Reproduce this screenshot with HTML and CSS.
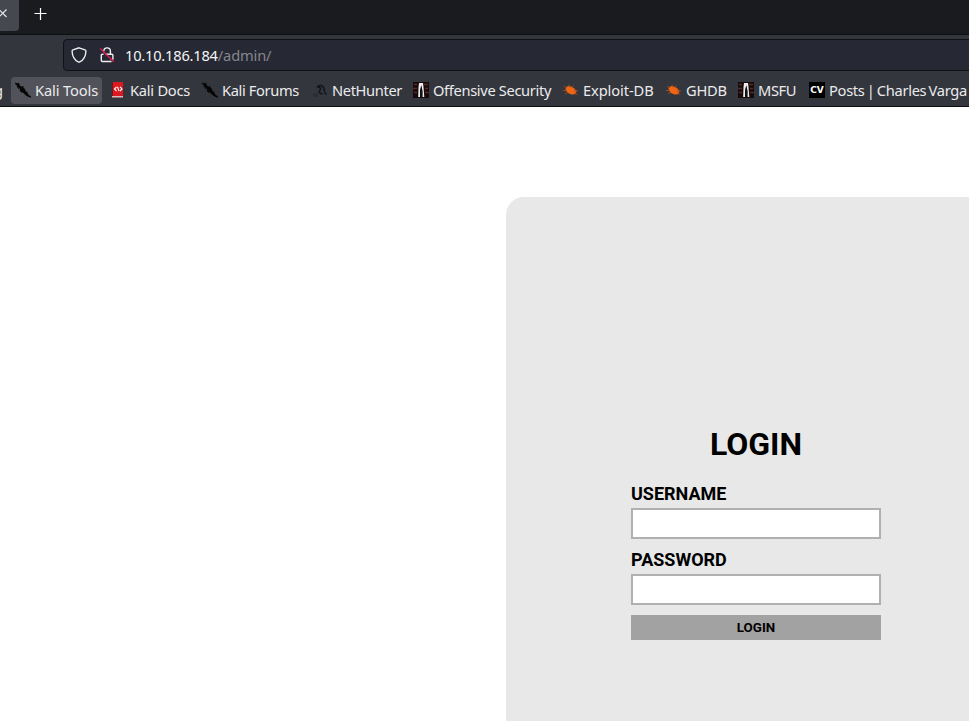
FILE: index.html
```html
<!DOCTYPE html>
<html lang="en">
<head>
<meta charset="utf-8">
<title>Login</title>
<link rel="stylesheet" href="styles.css">
</head>
<body>
<svg class="defs" width="0" height="0" aria-hidden="true">
  <symbol id="kali" viewBox="0 0 16 16"><path d="M0 .5l2 .8L4.500 1l-.3 1.500L6 4.500l3-.3-.8 1.200L10 7l.5 2 2 1.200.5 2 3 2.300v1.300l-3-1-2.500-1.500-1.700-2L6.500 10 5 8l-.5-2L2.500 5 2 3.500.5 2.500z"/><path d="M2 4l2 3M5 8l1.500 2.500" stroke="#050505"/></symbol>
  <symbol id="docs" viewBox="0 0 16 16"><path fill="#7d1118" d="M2 1h11v15H2z"/><path fill="#dc1820" d="M3 0h10v14H3z"/><path fill="#c9c2bd" d="M2 14h11v1.500H2z"/><path d="M6.500 5L4.500 7l2 2M10 4.800L12 7l-2 2M7.500 4.800L9 9" fill="none" stroke="#fff" stroke-width="1.100"/></symbol>
  <symbol id="hunter" viewBox="0 0 16 16"><path d="M5 5.500C7 2.500 11 3 12 6.500c.8 3-.2 5 2.500 6M6 5c3-.5 3 2 1.500 4-.8 1.500.5 2.500 3 3" fill="none" stroke="#121417" stroke-width="1.500"/><path d="M1 12.800l5-1M2 14h4" stroke="#24272b"/></symbol>
  <symbol id="offsec" viewBox="0 0 16 16"><path fill="#180a0a" d="M0 0h16v16H0z"/><path d="M1 2.500h3M11 2.500h4M0 6.500h4M12 6.500h3M1 10.500h3M12 10.500h4" stroke="#542b2b" stroke-width="1.500"/><path fill="#eee" d="M6 1h4l.5 4 .8 10H9.500V9L8.500 4 7 9v6H5.200l.3-10z"/><path fill="#111" d="M8.200 3l1 6v6H7V9z"/></symbol>
  <symbol id="bug" viewBox="0 0 16 16"><path fill="#ef6513" d="M2.500 6L5 4l3.500.8 3.200 2 1.800 3-1.500 2.500-3.500.2-3.500-1.500L3 8.500z"/><path d="M1 4.500l3 1M6 2.500l1 3M10 3.500l-.5 2.500M0 8.500h4M2 12l3-2M11 9l3 4M11 8l4 1" stroke="#ad5220" stroke-width=".8"/></symbol>
</svg>
<div class="window">
  <div class="tabs">
    <div class="tab"><svg width="19" height="31" viewBox="0 0 19 31"><path d="M-1 9.500l7.500 7.500M6.500 9.500L-1 17"/></svg></div>
    <svg class="plus" width="14" height="14" viewBox="0 0 14 14"><path d="M7.500 1v12M1.500 6.500h12"/></svg>
  </div>
  <div class="nav">
    <div class="url">
      <svg class="shield" width="16" height="16" viewBox="0 0 16 16"><path d="M8 .8l6 2.100c.7.300.9.700.9 1.300-.2 5-2.400 8.800-6.100 10.700-.5.300-1.100.300-1.600 0C3.500 13 1.300 9.200 1.100 4.200c0-.6.200-1 .9-1.300z"/></svg>
      <svg class="lock" width="16" height="16" viewBox="0 0 16 16"><path d="M4.800 4.200a3.300 3.300 0 0 1 6.600 0V7M6.500 7.200h6.200c.8 0 1.200.4 1.200 1.100v4.500M12.500 14.500h-9c-.8 0-1.200-.4-1.200-1.100V8.300c0-.7.400-1.100 1.200-1.100h1"/><path class="slash" d="M1.200 1.500l13.500 13.300"/></svg>
      <span class="address">10.10.186.184<i>/admin/</i></span>
    </div>
  </div>
  <div class="bookmarks">
    <span class="cut">g</span>
    <div class="bm active tools"><svg><use href="#kali"/></svg><span>Kali Tools</span></div>
    <div class="bm docs"><svg><use href="#docs"/></svg><span>Kali Docs</span></div>
    <div class="bm forums"><svg><use href="#kali"/></svg><span>Kali Forums</span></div>
    <div class="bm nethunter"><svg><use href="#hunter"/></svg><span>NetHunter</span></div>
    <div class="bm offensive"><svg><use href="#offsec"/></svg><span>Offensive Security</span></div>
    <div class="bm exploit"><svg><use href="#bug"/></svg><span>Exploit-DB</span></div>
    <div class="bm ghdb"><svg><use href="#bug"/></svg><span>GHDB</span></div>
    <div class="bm msfu"><svg><use href="#offsec"/></svg><span>MSFU</span></div>
    <div class="bm posts"><b class="cv">CV</b><span>Posts | Charles Varga</span></div>
  </div>
  <main class="page">
    <form class="card">
      <h1>LOGIN</h1>
      <label for="user">USERNAME</label>
      <input id="user" type="text">
      <label for="pass">PASSWORD</label>
      <input id="pass" type="password">
      <button type="button">LOGIN</button>
    </form>
  </main>
</div>
</body>
</html>
```
FILE: styles.css
```css
* { box-sizing: border-box; }
body { margin: 0; overflow: hidden; background: #fff; }
.defs { display: block; }
.window { width: 969px; height: 721px; overflow: hidden; font-family: "Noto Sans", sans-serif; display: flex; flex-direction: column; }
.tabs { height: 35px; flex: none; background: #1a1b1f; border-bottom: 1px solid #0e0f12; display: flex; align-items: flex-start; }
.tab { width: 19px; height: 31px; background: #46484f; border-radius: 0 0 4px 0; }
.tabs svg { display: block; fill: none; stroke: #e8e8ea; stroke-width: 1.2; }
.tabs .plus { margin: 7px 0 0 14px; stroke: #fff; stroke-width: 1.2; }
.nav { height: 40px; flex: none; background: #33363d; padding: 4px 0 4px 63px; }
.url { height: 32px; width: 920px; border: 1px solid #101216; border-radius: 4px; background: #262833; display: flex; align-items: center; padding-left: 7px; }
.url svg { fill: none; stroke: #eeeef0; stroke-width: 1.4; flex: none; }
.url .lock { margin-left: 12px; }
.url .slash { stroke: #e01b50; }
.address { margin-left: 10px; font-size: 14.67px; line-height: 20px; color: #f4f4f6; white-space: nowrap; letter-spacing: -.22px; }
.address i { font-style: normal; color: #85868d; letter-spacing: -.15px; }
.bookmarks { height: 32px; flex: none; background: #33363d; border-bottom: 1px solid #0c0d10; display: flex; align-items: center; padding-bottom: 1px; font-size: 14.67px; line-height: 20px; color: #ebebed; white-space: nowrap; }
.cut { width: 3px; flex: none; display: flex; justify-content: flex-end; overflow: hidden; margin-right: 8px; }
.bm { display: flex; align-items: center; gap: 4px; flex: none; height: 27px; padding: 0 4px; margin-right: 4px; border-radius: 4px; }
.bm.active { background: #52535a; }
.bm svg { width: 16px; height: 16px; flex: none; fill: #050505; }
.tools { width: 91px; letter-spacing: -.12px; }
.docs { width: 88px; letter-spacing: -.25px; }
.forums { width: 106px; letter-spacing: -.36px; }
.nethunter { width: 97px; letter-spacing: -.36px; }
.offensive { width: 146px; letter-spacing: -.34px; }
.exploit { width: 99px; letter-spacing: -.1px; }
.ghdb { width: 68px; letter-spacing: -.25px; }
.msfu { width: 67px; letter-spacing: -.4px; }
.posts { width: 164px; letter-spacing: -.3px; word-spacing: -1.3px; }
.cv { width: 16px; height: 16px; flex: none; background: #000; color: #fff; font: bold 9px/16px "DejaVu Sans", sans-serif; text-align: center; letter-spacing: 0; }
.page { flex: 1; min-height: 0; padding: 90px 0 0 506px; background: #fff; overflow: hidden; }
.card { width: 500px; height: 700px; background: #e8e8e8; border-radius: 18px; padding: 228px 125px 0; font-family: Roboto, sans-serif; color: #000; display: flex; flex-direction: column; }
.card h1 { margin: 0 0 20px; font-size: 32px; line-height: 38px; font-weight: 700; text-align: center; }
.card label { font-size: 18px; line-height: 21px; font-weight: 700; margin-bottom: 4px; }
.card input { width: 250px; height: 31px; border: 2px solid #b0b0b0; background: #fff; margin: 0 0 10px; padding: 0; outline: 0; }
.card button { width: 250px; height: 25px; border: 0; padding: 0; background: #a2a2a2; color: #000; font: 700 13.33px/25px Roboto, sans-serif; }
```
